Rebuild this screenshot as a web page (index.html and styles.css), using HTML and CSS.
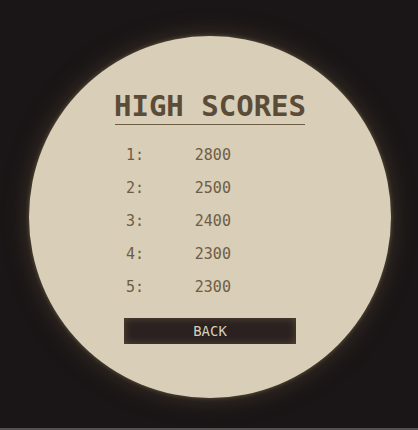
FILE: index.html
```html
<!DOCTYPE html>
<html lang="en">
<head>
    <meta charset="UTF-8">
    <meta name="viewport" content="width=device-width, initial-scale=1.0">
    <title>High Scores</title>
    <link rel="stylesheet" href="styles.css">
</head>
<body>

    <main class="scope">
        <h1 class="title">HIGH SCORES</h1>
        <table class="scores">
            <tbody>
                <tr><th scope="row">1:</th><td>2800</td></tr>
                <tr><th scope="row">2:</th><td>2500</td></tr>
                <tr><th scope="row">3:</th><td>2400</td></tr>
                <tr><th scope="row">4:</th><td>2300</td></tr>
                <tr><th scope="row">5:</th><td>2300</td></tr>
            </tbody>
        </table>
        <button type="button" class="back">BACK</button>
    </main>

</body>
</html>
```
FILE: styles.css
```css
* {
    box-sizing: border-box;
}

body {
    margin: 0;
    min-height: 100vh;
    padding: 6px 0 0 2px;
    display: flex;
    align-items: center;
    justify-content: center;
    background-color: #1a1516;
    border-bottom: 2px solid #555052;
    font-family: "DejaVu Sans Mono", monospace;
    color: #6d5d45;
}

.scope {
    width: 87%;
    max-width: 400px;
    aspect-ratio: 1;
    display: flex;
    flex-direction: column;
    align-items: center;
    padding-top: 56px;
    border-radius: 50%;
    background-color: #d9ceb7;
    box-shadow: 0 0 4px #65563f, 0 0 24px #40372b;
}

.title {
    width: 190px;
    margin: 0 0 13px;
    padding-bottom: 4px;
    display: flex;
    justify-content: center;
    border-bottom: 1px solid #6d5d45;
    font-size: 29px;
    line-height: 28px;
    white-space: nowrap;
    color: #5a4c38;
}

.scores {
    width: 172px;
    border-collapse: collapse;
    font-size: 15px;
}

.scores th,
.scores td {
    height: 33px;
    padding: 0 2px;
    font-weight: normal;
    text-align: left;
}

.scores th {
    width: 40%;
}

/* Dark bar with a warm glow along its edges */
.back {
    width: 172px;
    height: 26px;
    margin-top: 15px;
    padding: 0;
    border: 0;
    background-color: #2a2120;
    box-shadow: inset 0 0 8px #5a4b36;
    font-family: inherit;
    font-size: 14px;
    color: #d9ceb7;
    cursor: pointer;
}
```
